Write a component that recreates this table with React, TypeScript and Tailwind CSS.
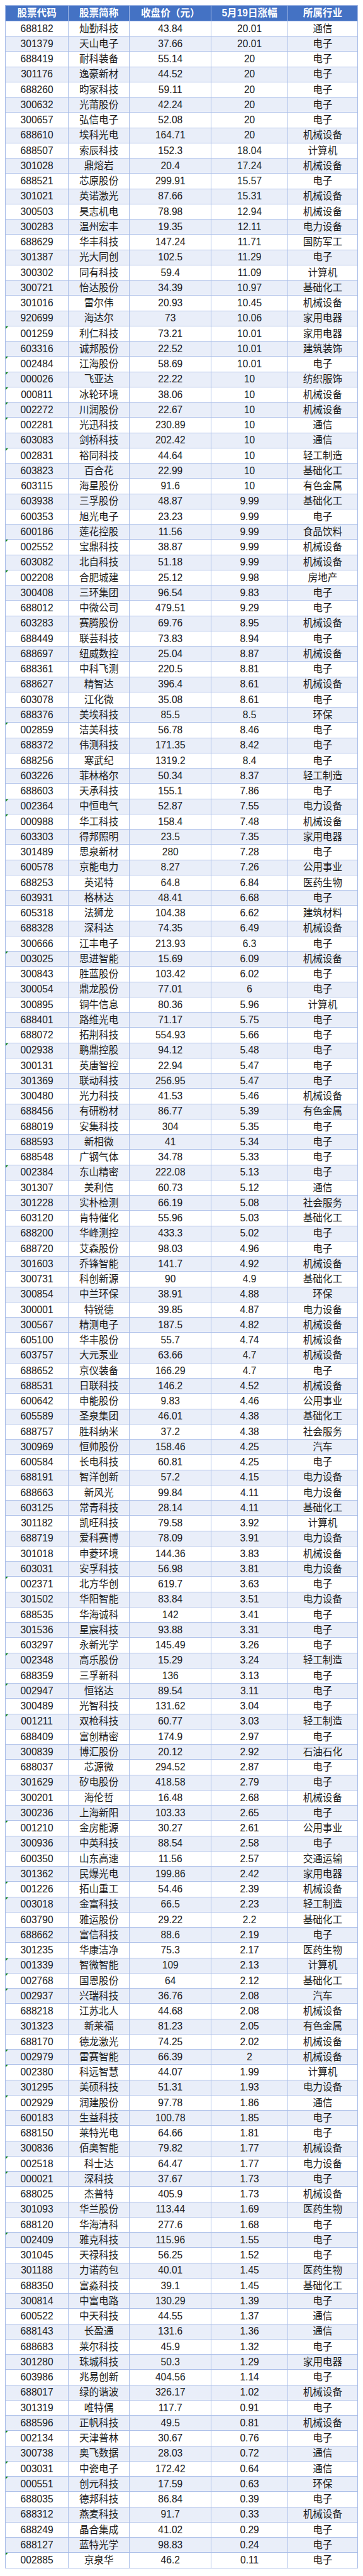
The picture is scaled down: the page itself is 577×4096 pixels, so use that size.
const raw = `688182 灿勤科技 43.84 20.01 通信
301379 天山电子 37.66 20.01 电子
688419 耐科装备 55.14 20 电子
301176 逸豪新材 44.52 20 电子
688260 昀冢科技 59.11 20 电子
300632 光莆股份 42.24 20 电子
300657 弘信电子 52.08 20 电子
688610 埃科光电 164.71 20 机械设备
688507 索辰科技 152.3 18.04 计算机
301028 鼎熔岩 20.4 17.24 机械设备
688521 芯原股份 299.91 15.57 电子
301021 英诺激光 87.66 15.31 机械设备
300503 昊志机电 78.98 12.94 机械设备
300283 温州宏丰 19.35 12.11 电力设备
688629 华丰科技 147.24 11.71 国防军工
301387 光大同创 102.5 11.29 电子
300302 同有科技 59.4 11.09 计算机
300721 怡达股份 34.39 10.97 基础化工
301016 雷尔伟 20.93 10.45 机械设备
920699 海达尔 73 10.06 家用电器
001259 利仁科技 73.21 10.01 家用电器
603316 诚邦股份 22.52 10.01 建筑装饰
002484 江海股份 58.69 10.01 电子
000026 飞亚达 22.22 10 纺织服饰
000811 冰轮环境 38.06 10 机械设备
002272 川润股份 22.67 10 机械设备
002281 光迅科技 230.89 10 通信
603083 剑桥科技 202.42 10 通信
002831 裕同科技 44.64 10 轻工制造
603823 百合花 22.99 10 基础化工
603115 海星股份 91.6 10 有色金属
603938 三孚股份 48.87 9.99 基础化工
600353 旭光电子 23.23 9.99 电子
600186 莲花控股 11.56 9.99 食品饮料
002552 宝鼎科技 38.87 9.99 机械设备
603082 北自科技 51.18 9.99 机械设备
002208 合肥城建 25.12 9.98 房地产
300408 三环集团 96.54 9.83 电子
688012 中微公司 479.51 9.29 电子
603283 赛腾股份 69.76 8.95 机械设备
688449 联芸科技 73.83 8.94 电子
688697 纽威数控 25.04 8.87 机械设备
688361 中科飞测 220.5 8.81 电子
688627 精智达 396.4 8.61 机械设备
603078 江化微 35.08 8.61 电子
688376 美埃科技 85.5 8.5 环保
002859 洁美科技 56.78 8.46 电子
688372 伟测科技 171.35 8.42 电子
688256 寒武纪 1319.2 8.4 电子
603226 菲林格尔 50.34 8.37 轻工制造
688603 天承科技 155.1 7.86 电子
002364 中恒电气 52.87 7.55 电力设备
000988 华工科技 158.4 7.48 机械设备
603303 得邦照明 23.5 7.35 家用电器
301489 思泉新材 280 7.28 电子
600578 京能电力 8.27 7.26 公用事业
688253 英诺特 64.8 6.84 医药生物
603931 格林达 48.41 6.68 电子
605318 法狮龙 104.38 6.62 建筑材料
688328 深科达 74.35 6.49 机械设备
300666 江丰电子 213.93 6.3 电子
003025 思进智能 15.69 6.09 机械设备
300843 胜蓝股份 103.42 6.02 电子
300054 鼎龙股份 77.01 6 电子
300895 铜牛信息 80.36 5.96 计算机
688401 路维光电 71.17 5.75 电子
688072 拓荆科技 554.93 5.66 电子
002938 鹏鼎控股 94.12 5.48 电子
300131 英唐智控 22.94 5.47 电子
301369 联动科技 256.95 5.47 电子
300480 光力科技 41.53 5.46 机械设备
688456 有研粉材 86.77 5.39 有色金属
688019 安集科技 304 5.35 电子
688593 新相微 41 5.34 电子
688548 广钢气体 34.78 5.33 电子
002384 东山精密 222.08 5.13 电子
301307 美利信 60.73 5.12 通信
301228 实朴检测 66.19 5.08 社会服务
603120 肯特催化 55.96 5.03 基础化工
688200 华峰测控 433.3 5.02 电子
688720 艾森股份 98.03 4.96 电子
301603 乔锋智能 141.7 4.92 机械设备
300731 科创新源 90 4.9 基础化工
300854 中兰环保 38.91 4.88 环保
300001 特锐德 39.85 4.87 电力设备
300567 精测电子 187.5 4.82 机械设备
605100 华丰股份 55.7 4.74 机械设备
603757 大元泵业 63.66 4.7 机械设备
688652 京仪装备 166.29 4.7 电子
688531 日联科技 146.2 4.52 机械设备
600642 申能股份 9.83 4.46 公用事业
605589 圣泉集团 46.01 4.38 基础化工
688757 胜科纳米 37.2 4.38 社会服务
300969 恒帅股份 158.46 4.25 汽车
600584 长电科技 60.81 4.25 电子
688191 智洋创新 57.2 4.15 电力设备
688663 新风光 99.84 4.11 电力设备
603125 常青科技 28.14 4.11 基础化工
301182 凯旺科技 79.58 3.92 计算机
688719 爱科赛博 78.09 3.91 电力设备
301018 申菱环境 144.36 3.83 机械设备
603031 安孚科技 56.98 3.81 电力设备
002371 北方华创 619.7 3.63 电子
301502 华阳智能 83.84 3.51 电力设备
688535 华海诚科 142 3.41 电子
301536 星宸科技 93.88 3.31 电子
603297 永新光学 145.49 3.26 电子
002348 高乐股份 15.29 3.24 轻工制造
688359 三孚新科 136 3.13 电子
002947 恒铭达 89.54 3.11 电子
300489 光智科技 131.62 3.04 电子
001211 双枪科技 60.77 3.03 轻工制造
688409 富创精密 174.9 2.97 电子
300839 博汇股份 20.12 2.92 石油石化
688037 芯源微 294.52 2.87 电子
301629 矽电股份 418.58 2.79 电子
300201 海伦哲 16.48 2.68 机械设备
300236 上海新阳 103.33 2.65 电子
001210 金房能源 30.27 2.61 公用事业
300936 中英科技 88.54 2.58 电子
600350 山东高速 11.56 2.57 交通运输
301362 民爆光电 199.86 2.42 家用电器
001226 拓山重工 54.46 2.39 机械设备
003018 金富科技 66.5 2.23 轻工制造
603790 雅运股份 29.22 2.2 基础化工
688662 富信科技 88.6 2.19 电子
301235 华康洁净 75.3 2.17 医药生物
001339 智微智能 109 2.13 计算机
002768 国恩股份 64 2.12 基础化工
002937 兴瑞科技 36.76 2.08 汽车
688218 江苏北人 44.68 2.08 机械设备
301323 新莱福 81.23 2.05 有色金属
688170 德龙激光 74.25 2.02 机械设备
002979 雷赛智能 66.39 2 机械设备
002380 科远智慧 44.07 1.99 计算机
301295 美硕科技 51.31 1.93 电力设备
002929 润建股份 97.78 1.86 通信
600183 生益科技 100.78 1.85 电子
688150 莱特光电 64.66 1.81 电子
300836 佰奥智能 79.82 1.77 机械设备
002518 科士达 64.47 1.77 电力设备
000021 深科技 37.67 1.73 电子
688025 杰普特 405.9 1.73 机械设备
301093 华兰股份 113.44 1.69 医药生物
688120 华海清科 277.6 1.68 电子
002409 雅克科技 115.96 1.55 电子
301045 天禄科技 56.25 1.52 电子
301188 力诺药包 40.01 1.45 医药生物
688350 富淼科技 39.1 1.45 基础化工
300814 中富电路 130.29 1.39 电子
600522 中天科技 44.55 1.37 通信
688143 长盈通 131.6 1.36 通信
688683 莱尔科技 45.9 1.32 电子
301280 珠城科技 50.3 1.29 家用电器
603986 兆易创新 404.56 1.14 电子
688017 绿的谐波 326.17 1.02 机械设备
301319 唯特偶 117.7 0.91 电子
688596 正帆科技 49.5 0.81 机械设备
002134 天津普林 30.67 0.76 电子
300738 奥飞数据 28.03 0.72 通信
003031 中瓷电子 172.42 0.64 通信
000551 创元科技 17.59 0.63 环保
688035 德邦科技 86.84 0.39 电子
688312 燕麦科技 91.7 0.33 机械设备
688249 晶合集成 41.02 0.29 电子
688127 蓝特光学 98.83 0.24 电子
002885 京泉华 46.2 0.11 电子`;

const rows = raw.split('\n').map((line) => line.trim().split(' '));

const headers = ['股票代码', '股票简称', '收盘价（元）', '5月19日涨幅', '所属行业'];

export default function App() {
  return (
    <div
      className="bg-white w-[577px] pt-[7.6px] pl-[8.1px] pb-[12px]"
      style={{ fontFamily: '"Liberation Sans", "Noto Sans CJK SC", sans-serif' }}
    >
      <table className="table-fixed border-collapse w-[560px] border border-[#6d8fd8] text-[15.6px] text-[#1b1b1b]">
        <colgroup>
          <col className="w-[100px]" />
          <col className="w-[97px]" />
          <col className="w-[130.4px]" />
          <col className="w-[121.2px]" />
          <col className="w-[111.4px]" />
        </colgroup>
        <thead>
          <tr className="h-[25.2px] bg-[#4472c4]">
            {headers.map((h) => (
              <th
                key={h}
                className="border border-[#a9bde8] text-white font-bold text-center leading-none p-0 whitespace-nowrap"
              >
                {h}
              </th>
            ))}
          </tr>
        </thead>
        <tbody>
          {rows.map((r, i) => (
            <tr key={r[0]} className={`h-[24.26px] ${i % 2 === 1 ? 'bg-[#e9eef9]' : 'bg-white'}`}>
              {r.map((cell, j) => (
                <td
                  key={j}
                  className="relative border border-[#a9bde8] text-center leading-none p-0 whitespace-nowrap"
                >
                  {j === 0 && cell.startsWith('0') && (
                    <span className="absolute left-0 top-0 w-0 h-0 border-t-[4px] border-r-[4px] border-t-[#1a8a1a] border-r-transparent" />
                  )}
                  {cell}
                </td>
              ))}
            </tr>
          ))}
        </tbody>
      </table>
    </div>
  );
}
